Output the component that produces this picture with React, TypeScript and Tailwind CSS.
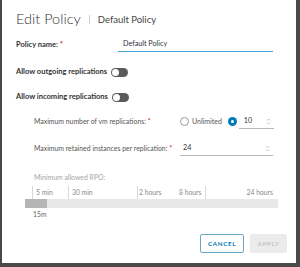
import React from "react";

const font = { fontFamily: "Lato, 'Open Sans', sans-serif" };

function Toggle() {
  return (
    <div className="relative w-[17px] h-[9px] rounded-full bg-[#5b5b5b]">
      <div className="absolute left-[1px] top-[1px] w-[7px] h-[7px] rounded-full bg-white" />
    </div>
  );
}

function Spinner() {
  return (
    <svg width="5" height="7" viewBox="0 0 5 7" className="shrink-0">
      <path d="M1 2.5 L2.5 1 L4 2.5" fill="none" stroke="#b5b5b5" strokeWidth="0.8" />
      <path d="M1 4.5 L2.5 6 L4 4.5" fill="none" stroke="#b5b5b5" strokeWidth="0.8" />
    </svg>
  );
}

const dividers = [7, 43, 112, 180];
const ticks = [
  { label: "5 min", left: 11 },
  { label: "30 min", left: 47 },
  { label: "2 hours", left: 114 },
  { label: "8 hours", left: 154 },
];

export default function App() {
  return (
    <div className="w-[300px] h-[267px] bg-[#4a4a4a] overflow-hidden" style={font}>
      <div className="ml-[2px] w-[294px] h-[263px] bg-white flex flex-col pl-[14px]">
        {/* header */}
        <div className="h-[37px] flex items-center pt-[2px]">
          <span className="text-[14.5px] font-light text-[#333] leading-none">Edit Policy</span>
          <span className="ml-[8px] w-px h-[9px] bg-[#cfcfcf]" />
          <span className="ml-[8px] text-[9.5px] text-[#444] leading-none">Default Policy</span>
        </div>
        {/* policy name */}
        <div className="h-[15px] flex items-center">
          <div className="w-[102px] shrink-0 text-[7.5px] font-bold text-[#333] leading-none">
            Policy name: <span className="text-[#c92100]">*</span>
          </div>
          <div className="w-[155px] shrink-0 h-[15px] border-b border-[#49a8d3] flex items-center pl-[5px] text-[7.2px] text-[#333] leading-none">
            Default Policy
          </div>
        </div>
        {/* outgoing */}
        <div className="mt-[14px] h-[12px] flex items-center">
          <span className="text-[7.5px] font-bold text-[#333] leading-none">Allow outgoing replications</span>
          <div className="ml-[4px]">
            <Toggle />
          </div>
        </div>
        {/* incoming */}
        <div className="mt-[13px] h-[12px] flex items-center">
          <span className="text-[7.5px] font-bold text-[#333] leading-none">Allow incoming replications</span>
          <div className="ml-[4px]">
            <Toggle />
          </div>
        </div>
        {/* max vm */}
        <div className="mt-[11px] h-[15px] flex items-center pl-[18px]">
          <div className="w-[146px] shrink-0 text-[6.9px] text-[#555] leading-none whitespace-nowrap">
            Maximum number of vm replications: <span className="text-[#c92100]">*</span>
          </div>
          <div className="w-[9px] h-[9px] shrink-0 rounded-full border border-[#9a9a9a] bg-white" />
          <span className="ml-[3px] text-[7px] text-[#555] leading-none">Unlimited</span>
          <div className="ml-[6px] w-[9px] h-[9px] shrink-0 rounded-full bg-[#0079b8] flex items-center justify-center">
            <div className="w-[3px] h-[3px] rounded-full bg-white" />
          </div>
          <div className="ml-[2px] w-[35px] shrink-0 h-[15px] border-b border-[#b8b8b8] flex items-center justify-between pl-[5px] pr-[3px]">
            <span className="text-[7.2px] text-[#333] leading-none">10</span>
            <Spinner />
          </div>
        </div>
        {/* max retained */}
        <div className="mt-[12px] h-[15px] flex items-center pl-[18px]">
          <div className="w-[146px] shrink-0 text-[6.9px] text-[#555] leading-none whitespace-nowrap">
            Maximum retained instances per replication: <span className="text-[#c92100]">*</span>
          </div>
          <div className="w-[93px] shrink-0 h-[15px] border-b border-[#b8b8b8] flex items-center justify-between pl-[3px] pr-[3px]">
            <span className="text-[7.2px] text-[#333] leading-none">24</span>
            <Spinner />
          </div>
        </div>
        {/* min RPO */}
        <div className="mt-[16px] h-[10px] flex items-center pl-[18px]">
          <span className="text-[6.9px] text-[#a6a6a6] leading-none">Minimum allowed RPO:</span>
        </div>
        {/* slider */}
        <div className="mt-[3px] ml-[9px] w-[253px] flex flex-col">
          <div className="relative h-[14px] text-[6.8px] text-[#8a8a8a] leading-none">
            {dividers.map((d) => (
              <div key={d} className="absolute top-[1px] bottom-0 w-px bg-[#d8d8d8]" style={{ left: d }} />
            ))}
            {ticks.map((t) => (
              <span key={t.label} className="absolute top-[4px] whitespace-nowrap" style={{ left: t.left }}>
                {t.label}
              </span>
            ))}
            <span className="absolute top-[4px] right-[5px] whitespace-nowrap">24 hours</span>
          </div>
          <div className="h-[9px] bg-[#e8e8e8] flex">
            <div className="w-[22px] h-full bg-[#b5b5b5]" />
          </div>
          <div className="h-[12px] flex items-center pl-[8px] text-[6.8px] text-[#666] leading-none">15m</div>
        </div>
        {/* buttons */}
        <div className="mt-[14px] flex justify-end pr-[9px] gap-[6px]">
          <div className="w-[44px] h-[19px] border border-[#6aa7c9] rounded-[2px] flex items-center justify-center text-[6.2px] font-bold tracking-[0.7px] text-[#0079b8]">
            CANCEL
          </div>
          <div className="w-[37px] h-[19px] bg-[#ebebeb] rounded-[2px] flex items-center justify-center text-[6.2px] font-bold tracking-[0.7px] text-[#c2c2c2]">
            APPLY
          </div>
        </div>
      </div>
    </div>
  );
}
